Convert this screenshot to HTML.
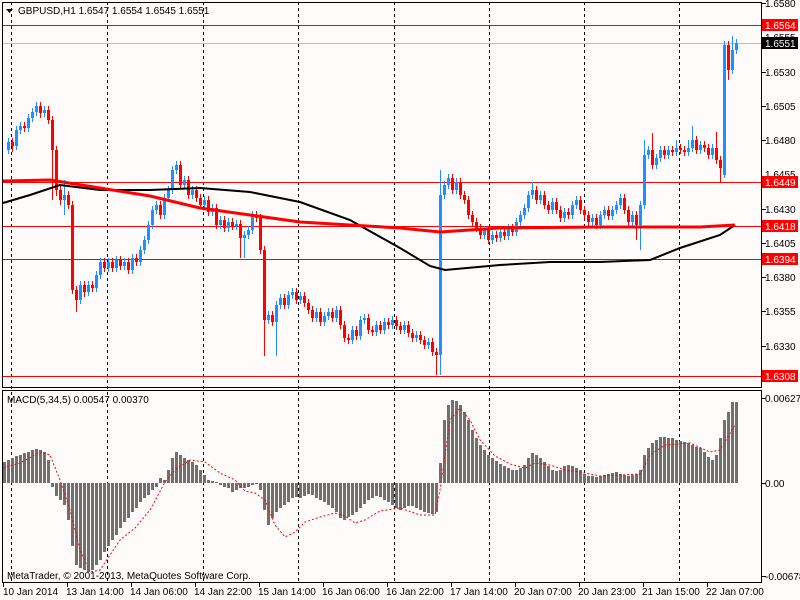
<!DOCTYPE html>
<html><head><meta charset="utf-8"><style>
html,body{margin:0;padding:0;width:800px;height:600px;overflow:hidden;background:#fffbfa}
svg{display:block}
text{font-family:"Liberation Sans",sans-serif;font-size:10px;fill:#000}
</style></head><body>
<svg width="800" height="600" xmlns="http://www.w3.org/2000/svg">
<rect width="800" height="600" fill="#fffbfa"/>
<g stroke="#000" stroke-dasharray="3,3">
<line x1="11.5" y1="2" x2="11.5" y2="582"/><line x1="107.5" y1="2" x2="107.5" y2="582"/><line x1="203.5" y1="2" x2="203.5" y2="582"/><line x1="298.5" y1="2" x2="298.5" y2="582"/><line x1="394.5" y1="2" x2="394.5" y2="582"/><line x1="489.5" y1="2" x2="489.5" y2="582"/><line x1="584.5" y1="2" x2="584.5" y2="582"/><line x1="679.5" y1="2" x2="679.5" y2="582"/>
</g>
<line x1="2" y1="43.5" x2="762" y2="43.5" stroke="#c0c0c0"/>
<g stroke="#f00"><line x1="2" y1="25.5" x2="762" y2="25.5"/><line x1="2" y1="182.5" x2="762" y2="182.5"/><line x1="2" y1="226.5" x2="762" y2="226.5"/><line x1="2" y1="259.5" x2="762" y2="259.5"/><line x1="2" y1="376.5" x2="762" y2="376.5"/></g>

<!-- blue candles -->
<path fill="none" stroke="#1e90ff" stroke-width="1" d="M8.5 138V154M16.5 126V150M20.5 122V134M28.5 114V132M32.5 108V122M36.5 102V116M44.5 106V117M64.5 180V215M80.5 281V304M88.5 281V296M96.5 271V292M100.5 258V279M108.5 258V272M116.5 256V272M124.5 258V270M132.5 254V274M140.5 246V266M144.5 236V254M148.5 221V244M152.5 206V229M156.5 201V214M164.5 194V219M168.5 186V202M172.5 166V194M176.5 161V174M184.5 176V189M192.5 186V199M204.5 196V209M212.5 204V216M220.5 216V229M228.5 218V232M236.5 220V230M244.5 231V258M248.5 226V239M252.5 211V234M268.5 311V324M276.5 301V356M280.5 294V309M288.5 291V309M292.5 288V299M300.5 292V304M316.5 308V322M324.5 312V326M328.5 308V320M336.5 306V322M352.5 326V344M360.5 316V340M364.5 314V324M376.5 321V336M384.5 318V334M392.5 316V329M404.5 321V334M416.5 331V342M428.5 338V349M440.5 170V375M444.5 181V199M448.5 174V189M456.5 178V194M484.5 226V239M492.5 231V244M500.5 228V242M508.5 224V240M516.5 218V236M520.5 211V226M524.5 204V219M528.5 191V212M532.5 182V199M540.5 191V204M552.5 198V214M564.5 208V222M572.5 201V219M576.5 196V209M592.5 214V226M600.5 211V229M604.5 206V219M612.5 206V220M616.5 201V214M620.5 194V209M632.5 211V226M640.5 201V250M644.5 140V209M648.5 146V159M656.5 154V169M660.5 146V162M668.5 146V159M676.5 140V156M688.5 140V156M692.5 126V152M700.5 141V154M712.5 144V159M724.5 41V178M732.5 36V74M736.5 39V54"/>
<path fill="none" stroke="#1e90ff" stroke-width="3" d="M8.5 150V142M16.5 146V130M20.5 130V126M28.5 128V118M32.5 118V112M36.5 112V106M44.5 113V110M64.5 200V195M80.5 300V285M88.5 292V285M96.5 288V275M100.5 275V262M108.5 268V262M116.5 268V260M124.5 266V262M132.5 270V258M140.5 262V250M144.5 250V240M148.5 240V225M152.5 225V210M156.5 210V205M164.5 215V198M168.5 198V190M172.5 190V170M176.5 170V165M184.5 185V180M192.5 195V190M204.5 205V200M212.5 212V208M220.5 225V220M228.5 228V222M236.5 226V224M244.5 238V235M248.5 235V230M252.5 230V215M268.5 320V315M276.5 322V305M280.5 305V298M288.5 305V295M292.5 295V292M300.5 300V296M316.5 318V312M324.5 322V316M328.5 316V312M336.5 318V310M352.5 340V330M360.5 336V320M364.5 320V318M376.5 332V325M384.5 330V322M392.5 325V320M404.5 330V325M416.5 338V335M428.5 345V342M440.5 355V195M444.5 195V185M448.5 185V178M456.5 190V182M484.5 235V230M492.5 240V235M500.5 238V232M508.5 236V228M516.5 232V222M520.5 222V215M524.5 215V208M528.5 208V195M532.5 195V190M540.5 200V195M552.5 210V202M564.5 218V212M572.5 215V205M576.5 205V200M592.5 222V218M600.5 225V215M604.5 215V210M612.5 216V210M616.5 210V205M620.5 205V198M632.5 222V215M640.5 225V205M644.5 205V155M648.5 155V150M656.5 165V158M660.5 158V150M668.5 155V150M676.5 152V148M688.5 152V148M692.5 148V140M700.5 150V145M712.5 155V148M724.5 175V45M732.5 70V50M736.5 50V43"/>
<!-- red candles -->
<path fill="none" stroke="#f00" stroke-width="1" d="M12.5 138V152M24.5 122V132M40.5 102V118M48.5 106V124M52.5 116V200M56.5 146V196M60.5 186V205M68.5 191V209M72.5 201V294M76.5 286V312M84.5 281V297M92.5 281V292M104.5 258V272M112.5 258V272M120.5 256V270M128.5 258V274M136.5 254V266M160.5 201V219M180.5 161V189M188.5 176V199M196.5 186V202M200.5 194V209M208.5 196V216M216.5 204V229M224.5 216V232M232.5 218V230M240.5 220V258M256.5 211V222M260.5 214V254M264.5 246V356M272.5 311V326M284.5 294V309M296.5 288V304M304.5 292V307M308.5 299V314M312.5 306V322M320.5 308V326M332.5 308V322M340.5 306V329M344.5 321V342M348.5 334V344M356.5 326V340M368.5 314V334M372.5 326V336M380.5 321V334M388.5 318V329M396.5 316V330M400.5 322V334M408.5 321V337M412.5 329V342M420.5 331V344M424.5 336V349M432.5 338V356M436.5 348V375M452.5 174V194M460.5 178V199M464.5 191V204M468.5 196V219M472.5 211V226M476.5 218V232M480.5 224V239M488.5 226V244M496.5 231V242M504.5 228V240M512.5 224V236M536.5 186V204M544.5 191V209M548.5 201V214M556.5 198V214M560.5 206V222M568.5 208V219M580.5 196V214M584.5 206V219M588.5 211V226M596.5 214V229M608.5 206V220M624.5 194V214M628.5 206V226M636.5 211V240M652.5 133V169M664.5 146V159M672.5 146V156M680.5 144V154M684.5 146V156M696.5 136V154M704.5 141V152M708.5 144V159M716.5 132V164M720.5 156V182M728.5 41V80"/>
<path fill="none" stroke="#f00" stroke-width="3" d="M12.5 142V146M24.5 126V128M40.5 106V113M48.5 110V120M52.5 120V150M56.5 150V190M60.5 190V200M68.5 195V205M72.5 205V290M76.5 290V300M84.5 285V292M92.5 285V288M104.5 262V268M112.5 262V268M120.5 260V266M128.5 262V270M136.5 258V262M160.5 205V215M180.5 165V185M188.5 180V195M196.5 190V198M200.5 198V205M208.5 200V212M216.5 208V225M224.5 220V228M232.5 222V226M240.5 224V238M256.5 215V218M260.5 218V250M264.5 250V320M272.5 315V322M284.5 298V305M296.5 292V300M304.5 296V303M308.5 303V310M312.5 310V318M320.5 312V322M332.5 312V318M340.5 310V325M344.5 325V338M348.5 338V340M356.5 330V336M368.5 318V330M372.5 330V332M380.5 325V330M388.5 322V325M396.5 320V326M400.5 326V330M408.5 325V333M412.5 333V338M420.5 335V340M424.5 340V345M432.5 342V352M436.5 352V355M452.5 178V190M460.5 182V195M464.5 195V200M468.5 200V215M472.5 215V222M476.5 222V228M480.5 228V235M488.5 230V240M496.5 235V238M504.5 232V236M512.5 228V232M536.5 190V200M544.5 195V205M548.5 205V210M556.5 202V210M560.5 210V218M568.5 212V215M580.5 200V210M584.5 210V215M588.5 215V222M596.5 218V225M608.5 210V216M624.5 198V210M628.5 210V222M636.5 215V225M652.5 150V165M664.5 150V155M672.5 150V152M680.5 148V150M684.5 150V152M696.5 140V150M704.5 145V148M708.5 148V155M716.5 148V160M720.5 160V168M728.5 45V70"/>

<polyline fill="none" stroke="#000" stroke-width="2" points="3,203 30,195 60,185 100,190 150,190 200,188 250,192 300,202 350,220 400,248 430,266 445,270 500,265 550,262 600,262 650,260 680,248 720,235 735,225"/>
<polyline fill="none" stroke="#f00" stroke-width="3" points="3,181 50,180 100,188 150,196 200,208 250,215 300,222 350,225 400,228 440,232 500,228 600,227 700,227 735,225"/>

<rect x="2.5" y="2.5" width="759" height="385" fill="none" stroke="#000"/>
<rect x="2.5" y="390.5" width="759" height="192" fill="none" stroke="#000"/>
<path d="M6 9h7l-3.5 4z" fill="#000"/>
<text x="18" y="14">GBPUSD,H1  1.6547 1.6554 1.6545 1.6551</text>

<g stroke="#000"><line x1="762" y1="3.5" x2="766" y2="3.5"/><line x1="762" y1="72.5" x2="766" y2="72.5"/><line x1="762" y1="106.5" x2="766" y2="106.5"/><line x1="762" y1="140.5" x2="766" y2="140.5"/><line x1="762" y1="209.5" x2="766" y2="209.5"/><line x1="762" y1="243.5" x2="766" y2="243.5"/><line x1="762" y1="277.5" x2="766" y2="277.5"/><line x1="762" y1="311.5" x2="766" y2="311.5"/><line x1="762" y1="346.5" x2="766" y2="346.5"/><line x1="762" y1="398.5" x2="766" y2="398.5"/><line x1="762" y1="483.5" x2="766" y2="483.5"/><line x1="762" y1="576.5" x2="766" y2="576.5"/></g>
<text x="765" y="7">1.6580</text><text x="765" y="41">1.6555</text><text x="765" y="76">1.6530</text><text x="765" y="110">1.6505</text><text x="765" y="144">1.6480</text><text x="765" y="178">1.6455</text><text x="765" y="213">1.6430</text><text x="765" y="247">1.6405</text><text x="765" y="281">1.6380</text><text x="765" y="315">1.6355</text><text x="765" y="350">1.6330</text>
<rect x="762" y="19" width="36" height="12" fill="#f00"/><text x="765" y="29" style="fill:#fff">1.6564</text>
<rect x="762" y="37" width="36" height="12" fill="#000"/><text x="765" y="47" style="fill:#fff">1.6551</text>
<rect x="762" y="176" width="36" height="12" fill="#f00"/><text x="765" y="186" style="fill:#fff">1.6449</text>
<rect x="762" y="220" width="36" height="12" fill="#f00"/><text x="765" y="230" style="fill:#fff">1.6418</text>
<rect x="762" y="253" width="36" height="12" fill="#f00"/><text x="765" y="263" style="fill:#fff">1.6394</text>
<rect x="762" y="370" width="36" height="12" fill="#f00"/><text x="765" y="380" style="fill:#fff">1.6308</text>

<!-- MACD histogram -->
<path fill="none" stroke="#707070" stroke-width="3" d="M4.5 483V462M8.5 483V460M12.5 483V458M16.5 483V456M20.5 483V455M24.5 483V453M28.5 483V452M32.5 483V450M36.5 483V449M40.5 483V450M44.5 483V452M48.5 483V460M52.5 483V487M56.5 483V496M60.5 483V500M64.5 483V505M68.5 483V520M72.5 483V546M76.5 483V565M80.5 483V568M84.5 483V570M88.5 483V572M92.5 483V570M96.5 483V565M100.5 483V560M104.5 483V552M108.5 483V546M112.5 483V540M116.5 483V535M120.5 483V528M124.5 483V522M128.5 483V518M132.5 483V512M136.5 483V508M140.5 483V502M144.5 483V498M148.5 483V495M152.5 483V490M156.5 483V487M160.5 483V478M164.5 483V480M168.5 483V470M172.5 483V458M176.5 483V452M180.5 483V455M184.5 483V458M188.5 483V460M192.5 483V462M196.5 483V465M200.5 483V470M204.5 483V475M208.5 483V480M212.5 483V481M216.5 483V482M220.5 483V485M224.5 483V487M228.5 483V488M232.5 483V492M236.5 483V490M240.5 483V488M244.5 483V488M248.5 483V487M252.5 483V485M256.5 483V484M260.5 483V490M264.5 483V510M268.5 483V525M272.5 483V518M276.5 483V512M280.5 483V508M284.5 483V505M288.5 483V502M292.5 483V498M296.5 483V497M300.5 483V498M304.5 483V496M308.5 483V494M312.5 483V495M316.5 483V498M320.5 483V500M324.5 483V502M328.5 483V505M332.5 483V508M336.5 483V512M340.5 483V518M344.5 483V520M348.5 483V517M352.5 483V515M356.5 483V512M360.5 483V508M364.5 483V504M368.5 483V500M372.5 483V498M376.5 483V496M380.5 483V497M384.5 483V500M388.5 483V502M392.5 483V505M396.5 483V508M400.5 483V510M404.5 483V508M408.5 483V506M412.5 483V506M416.5 483V508M420.5 483V510M424.5 483V512M428.5 483V513M432.5 483V514M436.5 483V512M440.5 483V463M444.5 483V420M448.5 483V405M452.5 483V400M456.5 483V401M460.5 483V405M464.5 483V412M468.5 483V420M472.5 483V430M476.5 483V438M480.5 483V445M484.5 483V450M488.5 483V455M492.5 483V458M496.5 483V461M500.5 483V464M504.5 483V466M508.5 483V468M512.5 483V470M516.5 483V470M520.5 483V468M524.5 483V465M528.5 483V458M532.5 483V453M536.5 483V455M540.5 483V458M544.5 483V462M548.5 483V466M552.5 483V470M556.5 483V471M560.5 483V470M564.5 483V466M568.5 483V465M572.5 483V466M576.5 483V468M580.5 483V470M584.5 483V474M588.5 483V476M592.5 483V476M596.5 483V477M600.5 483V476M604.5 483V475M608.5 483V474M612.5 483V473M616.5 483V472M620.5 483V474M624.5 483V475M628.5 483V476M632.5 483V475M636.5 483V474M640.5 483V470M644.5 483V455M648.5 483V448M652.5 483V443M656.5 483V440M660.5 483V437M664.5 483V437M668.5 483V438M672.5 483V438M676.5 483V440M680.5 483V441M684.5 483V442M688.5 483V443M692.5 483V445M696.5 483V447M700.5 483V448M704.5 483V452M708.5 483V457M712.5 483V460M716.5 483V455M720.5 483V438M724.5 483V420M728.5 483V412M732.5 483V402M736.5 483V402"/>
<polyline fill="none" stroke="#f00" stroke-width="1" stroke-dasharray="2,2" points="3,468 20,463 40,452 50,455 60,480 70,510 80,550 90,572 100,570 110,555 120,540 135,528 150,510 165,482 175,470 190,460 205,462 220,473 235,480 245,491 255,493 265,500 275,525 285,537 295,532 305,522 320,517 335,513 345,516 355,523 365,520 380,511 400,508 420,515 435,515 440,490 450,420 460,408 470,420 480,440 495,456 510,464 525,468 535,463 550,465 565,470 580,472 600,476 620,475 640,474 650,455 665,445 690,443 710,452 720,450 735,425"/>
<text x="7" y="403">MACD(5,34,5) 0.00547 0.00370</text>
<text x="7" y="579">MetaTrader, © 2001-2013, MetaQuotes Software Corp.</text>
<text x="765" y="402">0.00627</text><text x="765" y="487">0.00</text><text x="765" y="580">-0.00678</text>

<g stroke="#000"><line x1="3.5" y1="583" x2="3.5" y2="587"/><line x1="67.5" y1="583" x2="67.5" y2="587"/><line x1="131.5" y1="583" x2="131.5" y2="587"/><line x1="195.5" y1="583" x2="195.5" y2="587"/><line x1="259.5" y1="583" x2="259.5" y2="587"/><line x1="323.5" y1="583" x2="323.5" y2="587"/><line x1="387.5" y1="583" x2="387.5" y2="587"/><line x1="451.5" y1="583" x2="451.5" y2="587"/><line x1="515.5" y1="583" x2="515.5" y2="587"/><line x1="579.5" y1="583" x2="579.5" y2="587"/><line x1="643.5" y1="583" x2="643.5" y2="587"/><line x1="707.5" y1="583" x2="707.5" y2="587"/></g>
<text x="3" y="595">10 Jan 2014</text><text x="66" y="595">13 Jan 14:00</text><text x="130" y="595">14 Jan 06:00</text><text x="194" y="595">14 Jan 22:00</text><text x="258" y="595">15 Jan 14:00</text><text x="322" y="595">16 Jan 06:00</text><text x="386" y="595">16 Jan 22:00</text><text x="450" y="595">17 Jan 14:00</text><text x="514" y="595">20 Jan 07:00</text><text x="578" y="595">20 Jan 23:00</text><text x="642" y="595">21 Jan 15:00</text><text x="706" y="595">22 Jan 07:00</text>
</svg>
</body></html>
